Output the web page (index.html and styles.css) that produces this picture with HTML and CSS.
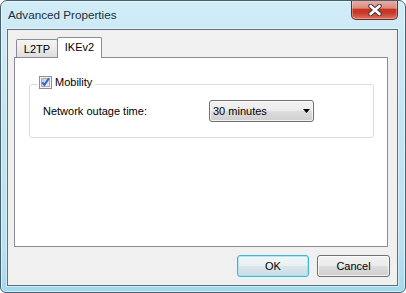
FILE: index.html
```html
<!DOCTYPE html>
<html>
<head>
<meta charset="utf-8">
<link rel="stylesheet" href="styles.css">
</head>
<body>
<div class="window">
  <div class="titlebar">
    <span class="title">Advanced Properties</span>
    <div class="close">
      <svg width="16" height="12" viewBox="0 0 16 12">
        <path d="M3.5 2 L12.5 10 M12.5 2 L3.5 10" stroke="#4b3b3b" stroke-width="4.6" stroke-linecap="round" fill="none"/>
        <path d="M3.5 2 L12.5 10 M12.5 2 L3.5 10" stroke="#ffffff" stroke-width="2.6" stroke-linecap="round" fill="none"/>
      </svg>
    </div>
  </div>
  <div class="client">
    <div class="tabs">
      <div class="tab">L2TP</div>
      <div class="tab active">IKEv2</div>
    </div>
    <div class="page">
      <fieldset class="group">
        <legend class="legend">
          <svg class="check" width="13" height="13" viewBox="0 0 13 13">
            <defs>
              <linearGradient id="cb" x1="0" y1="0" x2="1" y2="1">
                <stop offset="0" stop-color="#c3c8cf"/>
                <stop offset="1" stop-color="#eef0f2"/>
              </linearGradient>
            </defs>
            <rect x="0.5" y="0.5" width="12" height="12" fill="#f4f4f4" stroke="#8e8f8f"/>
            <rect x="2.5" y="2.5" width="8" height="8" fill="url(#cb)" stroke="#a9aeb5"/>
            <path d="M3.2 6.3 L5.4 8.8 L10 2.2" stroke="#3566d0" stroke-width="2" fill="none"/>
          </svg>
          <span>Mobility</span>
        </legend>
        <div class="row">
          <span class="label">Network outage time:</span>
          <div class="combo">
            <span>30 minutes</span>
            <svg width="7" height="4" viewBox="0 0 7 4"><path d="M0 0 H7 L3.5 4 Z" fill="#000"/></svg>
          </div>
        </div>
      </fieldset>
    </div>
    <div class="buttons">
      <div class="btn default">OK</div>
      <div class="btn cancel">Cancel</div>
    </div>
  </div>
</div>
</body>
</html>
```

FILE: styles.css
```css
* { box-sizing: border-box; }

body {
  margin: 0;
  font-family: "Liberation Sans", Arial, sans-serif;
  font-size: 11px;
  color: #000;
  background: #fff;
}

.window {
  width: 406px;
  height: 293px;
  border: 1px solid #46616d;
  border-radius: 7px 7px 6px 6px;
  background: linear-gradient(180deg, #d0ecf7 0%, #c3e5f3 40%, #b9e1f1 85%, #a3d9ee 100%);
  box-shadow: inset 0 0 0 1px rgba(255, 255, 255, 0.55);
  display: flex;
  flex-direction: column;
  padding: 0 7px 6px 6px;
  overflow: hidden;
}

.titlebar {
  height: 28px;
  display: flex;
  align-items: flex-start;
}

.title {
  font-size: 11.7px;
  line-height: 16px;
  color: #1c2e3d;
  margin: 6px 0 0 1px;
}

.close {
  margin-left: auto;
  margin-top: -1px;
  width: 47px;
  height: 20px;
  border: 1px solid #6a2a22;
  border-top: none;
  border-radius: 0 0 5px 5px;
  background: linear-gradient(180deg, #eab1aa 0%, #dc8a80 42%, #c8341f 50%, #c63a27 68%, #dc7466 100%);
  box-shadow: inset 0 0 0 1px rgba(255, 255, 255, 0.3);
  display: flex;
  align-items: center;
  justify-content: center;
}

.client {
  flex: 1;
  border: 1px solid #5e707a;
  background: #f0f0f0;
  box-shadow: 0 0 0 1px rgba(255, 255, 255, 0.45);
  display: flex;
  flex-direction: column;
  padding: 7px 0 0 6px;
}

.tabs {
  display: flex;
  align-items: flex-end;
  height: 20px;
  padding-left: 2px;
}

.tab {
  height: 18px;
  width: 42px;
  border: 1px solid #898c95;
  border-bottom: none;
  border-radius: 2px 2px 0 0;
  background: linear-gradient(180deg, #f5f5f5 0%, #ebebeb 50%, #dedede 100%);
  display: flex;
  align-items: center;
  justify-content: center;
  line-height: 14px;
  padding-top: 1px;
}

.tab.active {
  position: relative;
  z-index: 1;
  height: 21px;
  width: 45px;
  margin-left: -1px;
  margin-bottom: -1px;
  background: #fff;
  padding: 0 0 3px 0;
}

.page {
  width: 374px;
  height: 190px;
  border: 1px solid #898c95;
  background: #fff;
}

.group {
  margin: 18px 0 0 14px;
  width: 345px;
  border: 1px solid #d5dfe5;
  border-radius: 3px;
  padding: 0 0 15px 0;
  min-width: 0;
}

.legend {
  margin-left: 8px;
  padding: 0 3px 3px 1px;
  height: 16px;
  display: flex;
  align-items: flex-start;
  gap: 3px;
  line-height: 13px;
}

.check { display: block; flex: none; }

.row {
  margin-top: 8px;
  padding-left: 13px;
  display: flex;
  align-items: center;
}

.label {
  flex: 0 0 166px;
}

.combo {
  width: 105px;
  height: 22px;
  border: 1px solid #707070;
  border-radius: 3px;
  background: linear-gradient(180deg, #f2f2f2 0%, #ebebeb 50%, #dddddd 50%, #cfcfcf 100%);
  box-shadow: inset 0 0 0 1px rgba(255, 255, 255, 0.7);
  display: flex;
  align-items: center;
  justify-content: space-between;
  padding: 0 3px 0 3px;
}

.buttons {
  margin: 8px 7px 0 0;
  display: flex;
  justify-content: flex-end;
  gap: 8px;
}

.btn {
  height: 22px;
  border: 1px solid #707070;
  border-radius: 3px;
  background: linear-gradient(180deg, #f2f2f2 0%, #ebebeb 50%, #dddddd 50%, #cfcfcf 100%);
  box-shadow: inset 0 0 0 1px rgba(255, 255, 255, 0.75);
  display: flex;
  align-items: center;
  justify-content: center;
}

.btn.default {
  width: 72px;
  border-color: #3fb6d6;
  background: linear-gradient(180deg, #f1f6f8 0%, #e8f0f3 50%, #dae6ea 50%, #ccdde3 100%);
  box-shadow: inset 0 0 0 1px rgba(160, 225, 242, 0.8);
}

.btn.cancel {
  width: 73px;
}
```
